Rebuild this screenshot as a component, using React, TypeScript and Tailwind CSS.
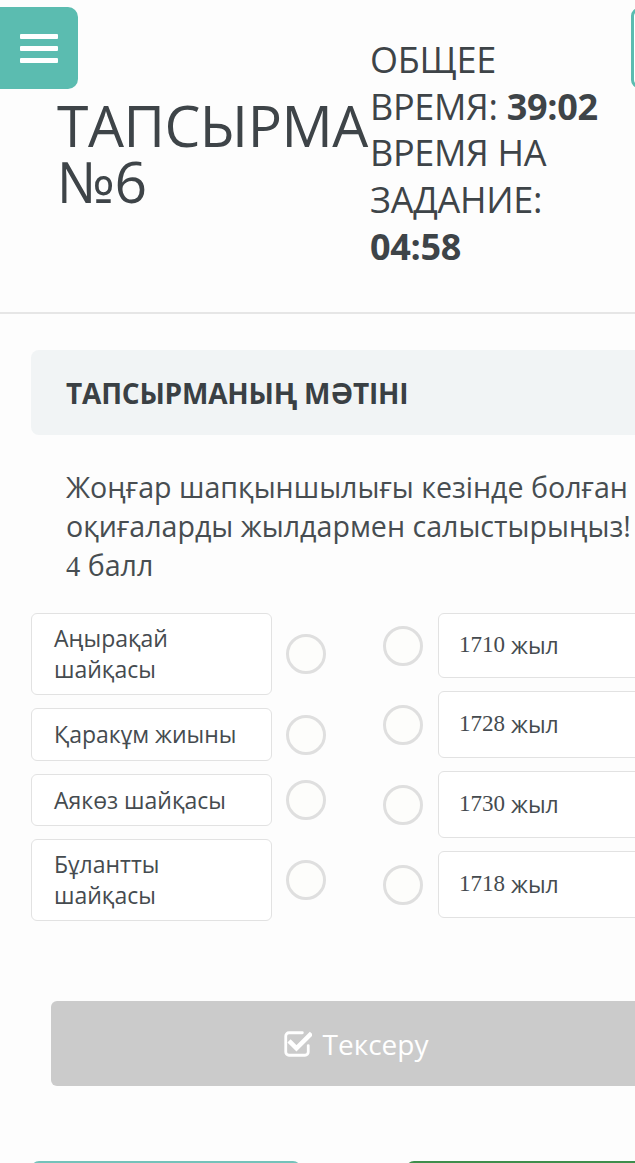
import React from "react";

const leftItems = [
  { text: "Аңырақай шайқасы", h: "h-[82px]" },
  { text: "Қаракұм жиыны", h: "h-[53px]" },
  { text: "Аякөз шайқасы", h: "h-[52px]" },
  { text: "Бұлантты шайқасы", h: "h-[82px]" },
];

const rightItems = [
  { year: "1710", h: "h-[65px]" },
  { year: "1728", h: "h-[67px]" },
  { year: "1730", h: "h-[67px]" },
  { year: "1718", h: "h-[67px]" },
];

function Circle() {
  return <div className="w-[40px] h-[40px] shrink-0 rounded-full border-[3px] border-[#dfdfdf] bg-[#fdfdfb]" />;
}

function CheckIcon() {
  return (
    <svg width="30" height="30" viewBox="0 0 28 28" fill="none">
      <path
        d="M19 3.5H6.5a3 3 0 0 0-3 3v15a3 3 0 0 0 3 3h15a3 3 0 0 0 3-3v-6"
        stroke="white"
        strokeWidth="2.6"
        strokeLinecap="round"
        strokeLinejoin="round"
      />
      <path d="M8 12.5l5.5 5.5L26 5.5" stroke="white" strokeWidth="4.2" strokeLinecap="square" strokeLinejoin="miter" />
    </svg>
  );
}

export default function App() {
  return (
    <div className="relative w-[635px] h-[1163px] overflow-hidden bg-[#fdfdfd] text-[#3e4448] [font-family:'Open_Sans',sans-serif]">
      {/* floating buttons */}
      <div className="absolute left-0 top-[7px] w-[78px] h-[82px] rounded-r-[10px] bg-[#5bbcb0] flex flex-col items-center justify-center gap-[7px] z-10">
        <div className="w-[38px] h-[5px] bg-white rounded-[1px]" />
        <div className="w-[38px] h-[5px] bg-white rounded-[1px]" />
        <div className="w-[38px] h-[5px] bg-white rounded-[1px]" />
      </div>
      <div className="absolute left-[631px] top-[8px] w-[60px] h-[80px] rounded-[8px] border-[3px] border-[#5bbcb0] bg-white z-10" />

      {/* header */}
      <div className="flex h-[314px] border-b-2 border-[#e6e6e6] w-[720px]">
        <div className="w-[370px] shrink-0 pl-[57px] pt-[97px]">
          <h1 className="text-[57px] leading-[56px] font-normal whitespace-nowrap tracking-[-0.5px]">
            ТАПСЫРМА
            <br />
            №6
          </h1>
        </div>
        <div className="w-[252px] pt-[37px] text-[36px] leading-[46.7px] tracking-[-0.3px]">
          <div>
            ОБЩЕЕ ВРЕМЯ: <span className="font-bold">39:02</span>
          </div>
          <div>
            ВРЕМЯ НА ЗАДАНИЕ: <span className="font-bold">04:58</span>
          </div>
        </div>
      </div>

      {/* main */}
      <div className="w-[720px] pl-[31px] pt-[36px]">
        <div className="h-[85px] rounded-[8px] bg-[#f1f4f5] flex items-center pl-[35px]">
          <h2 className="text-[28px] font-bold tracking-[-0.2px] text-[#3a4044]">ТАПСЫРМАНЫҢ МӘТІНІ</h2>
        </div>

        <div className="pl-[35px] pt-[32px] w-[640px] text-[28.6px] leading-[39px] text-[#474d51]">
          <p>Жоңғар шапқыншылығы кезінде болған оқиғаларды жылдармен салыстырыңыз!</p>
          <p>
            <span className="[font-family:'Liberation_Serif',serif]">4</span> балл
          </p>
        </div>

        <div className="flex gap-[57px] pt-[27px]">
          <div className="flex flex-col gap-[13px] w-[295px]">
            {leftItems.map((it) => (
              <div key={it.text} className="flex items-center gap-[14px]">
                <div
                  className={`${it.h} w-[241px] rounded-[6px] border border-[#e2e2e2] bg-white flex items-center pl-[22px] pr-[24px] text-[23px] leading-[31px] text-[#454b4f]`}
                >
                  {it.text}
                </div>
                <Circle />
              </div>
            ))}
          </div>
          <div className="flex flex-col gap-[13px]">
            {rightItems.map((it) => (
              <div key={it.year} className="flex items-center gap-[15px]">
                <Circle />
                <div
                  className={`${it.h} w-[240px] rounded-[6px] border border-[#e2e2e2] bg-white flex items-center pl-[20px] text-[23px] text-[#454b4f]`}
                >
                  <span className="[font-family:'Liberation_Serif',serif]">{it.year}</span>
                  <span className="ml-[6px]">жыл</span>
                </div>
              </div>
            ))}
          </div>
        </div>

        <div className="pl-[20px] pt-[80px]">
          <div className="h-[85px] w-[608px] rounded-[6px] bg-[#cbcbcb] flex items-center justify-center gap-[11px] text-white text-[28px]">
            <CheckIcon />
            <span>Тексеру</span>
          </div>
        </div>

        <div className="flex pt-[75px] gap-[105px]">
          <div className="w-[270px] h-[60px] rounded-[8px] border-2 border-[#74c2ba] bg-[#eaf7f5]" />
          <div className="w-[270px] h-[60px] rounded-[8px] bg-[#3e8e4c]" />
        </div>
      </div>
    </div>
  );
}
